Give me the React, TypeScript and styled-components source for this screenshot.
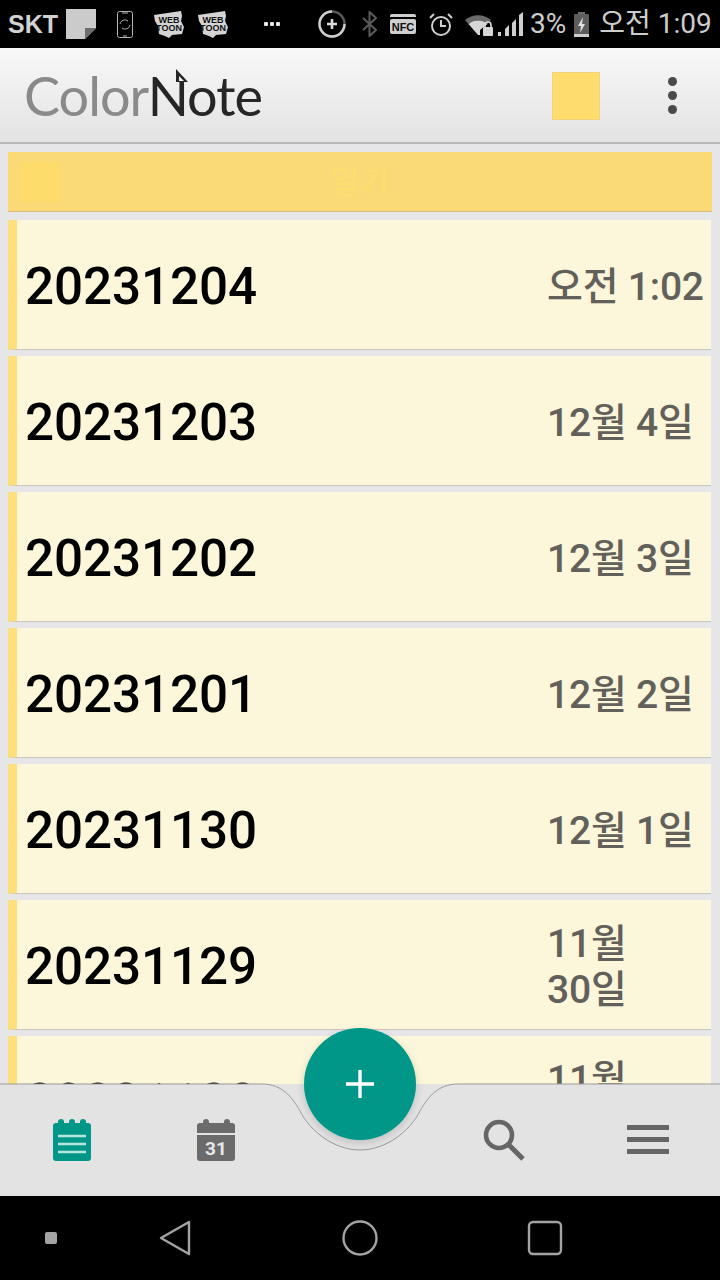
import React from "react";
import styled, { createGlobalStyle } from "styled-components";

const Global = createGlobalStyle`
  html, body { margin: 0; padding: 0; background: #000; }
  body { font-family: Roboto, "Noto Sans CJK KR", sans-serif; }
  * { box-sizing: border-box; }
`;

const Screen = styled.div`
  position: relative;
  width: 720px;
  height: 1280px;
  overflow: hidden;
  display: flex;
  flex-direction: column;
  background: #e6e6e8;
`;

const StatusBar = styled.div`
  flex: 0 0 48px;
  height: 48px;
  background: #000;
  display: flex;
  align-items: center;
  padding-left: 8px;
  color: #cfcfcf;
`;
const StatusSlot = styled.span<{ $ml: number }>`
  margin-left: ${(p) => p.$ml}px;
  display: flex;
  align-items: center;
  justify-content: center;
  flex: none;
`;
const Carrier = styled.span`
  font: 700 25px/48px "Liberation Sans", Arial, sans-serif;
  width: 48px;
  color: #d2d2d2;
  white-space: nowrap;
`;
const StatusText = styled.span<{ $ml: number }>`
  margin-left: ${(p) => p.$ml}px;
  font: 400 28px/48px Roboto, "Noto Sans CJK KR", sans-serif;
  white-space: nowrap;
  color: #cdcdcd;
`;

const Header = styled.header`
  flex: 0 0 96px;
  height: 96px;
  background: linear-gradient(#f8f8f8, #e3e3e3);
  border-bottom: 2px solid #b9b9b9;
  display: flex;
  align-items: center;
  padding: 0 43px 0 24px;
`;
const Logo = styled.div`
  font: 400 54px/1 Lato, sans-serif;
  letter-spacing: -1px;
  color: #8a8a8a;
  flex: 1;
  margin-top: 2px;
`;
const LogoDark = styled.span`
  color: #262626;
  position: relative;
`;
const LogoFold = styled.svg`
  position: absolute;
  left: 28px;
  top: 6px;
`;
const ColorSwatch = styled.div`
  width: 48px;
  height: 48px;
  margin-top: 1px;
  background: #fedd6e;
  border: 1px solid #eed27e;
  margin-right: 68px;
`;
const Dots = styled.div`
  width: 9px;
  display: flex;
  flex-direction: column;
  gap: 5px;
`;
const Dot = styled.span`
  width: 9px;
  height: 9px;
  border-radius: 50%;
  background: #4a4a4a;
`;

const Main = styled.main`
  flex: 1;
  overflow: hidden;
  padding: 8px 8px 0;
  display: flex;
  flex-direction: column;
  gap: 6px;
`;
const CategoryBar = styled.div`
  flex: none;
  height: 60px;
  margin-bottom: 2px;
  background: #f9da76;
  border-bottom: 1px solid #d8bd78;
  display: grid;
  grid-template-columns: 40px 1fr 40px;
  align-items: center;
  padding: 0 12px;
`;
const CategorySwatch = styled.span`
  width: 40px;
  height: 40px;
  background: #fddc6c;
`;
const CategoryTitle = styled.span`
  text-align: center;
  font: 500 32px/1 Roboto, "Noto Sans CJK KR", sans-serif;
  color: #fcdd70;
`;

const Row = styled.article`
  flex: none;
  height: 130px;
  margin-right: 1px;
  background: #fcf6da;
  border-left: 9px solid #fedf7c;
  border-bottom: 1px solid #c9c7bd;
  display: flex;
  align-items: center;
  padding: 4px 0 0 8px;
`;
const RowTitle = styled.div`
  flex: 1;
  padding-top: 1px;
  font: 500 51.2px/60px Roboto, sans-serif;
  color: #000;
  letter-spacing: -0.1px;
`;
const RowDate = styled.div`
  width: 164px;
  flex: none;
  font: 500 39px/46px Roboto, "Noto Sans CJK KR", sans-serif;
  letter-spacing: -0.2px;
  word-break: keep-all;
  color: #62605a;
`;

const BottomNav = styled.nav`
  position: absolute;
  left: 0;
  right: 0;
  bottom: 84px;
  height: 112px;
  background: #e3e3e3;
  display: grid;
  grid-template-columns: repeat(5, 144px);
  align-items: center;
  justify-items: center;
`;
const NavButton = styled.button`
  all: unset;
  display: flex;
  align-items: center;
  justify-content: center;
  width: 60px;
  height: 60px;
`;
const NavCurve = styled.svg`
  position: absolute;
  left: 0;
  top: -1px;
  pointer-events: none;
`;
const Fab = styled.button`
  all: unset;
  position: absolute;
  left: 304px;
  top: -56px;
  width: 112px;
  height: 112px;
  border-radius: 50%;
  background: #009688;
  box-shadow: 0 3px 8px rgba(0, 0, 0, 0.16);
  display: flex;
  align-items: center;
  justify-content: center;
`;
const SoftKeys = styled.div`
  position: absolute;
  left: 0;
  right: 0;
  bottom: 0;
  height: 84px;
  background: #000;
  display: grid;
  grid-template-columns: 102px 146px 224px 146px;
  align-items: center;
  justify-items: center;
`;

const NoteIcon = () => (
  <svg width="30" height="30" viewBox="0 0 30 30">
    <path d="M0 0h30v19L19 30H0z" fill="#cbcbcb" />
    <path d="M19 30V19h11z" fill="#6d6d6d" />
  </svg>
);
const PhoneIcon = () => (
  <svg width="16" height="27" viewBox="0 0 16 27" fill="none" stroke="#b5b5b5" strokeWidth="1">
    <rect x="0.5" y="0.5" width="15" height="26" rx="2" />
    <path d="M3 13a5 5 0 0 1 8-3M13 14a5 5 0 0 1-8 3" />
    <path d="M5 2h6M6 25h4" />
  </svg>
);
const WebtoonIcon = () => (
  <svg width="32" height="30" viewBox="0 0 32 30">
    <path d="M1 6l27-4 1 5-1 5 3 6-2 7-10 1-3 3-4-2-6-2-1-8-3-5z" fill="#d4d4d4" />
    <text x="16" y="14" textAnchor="middle" fontFamily="Liberation Sans" fontWeight="700" fontSize="9" fill="#111">WEB</text>
    <text x="16" y="22" textAnchor="middle" fontFamily="Liberation Sans" fontWeight="700" fontSize="9" fill="#111">TOON</text>
  </svg>
);
const MoreDots = () => (
  <svg width="16" height="6" viewBox="0 0 16 6" fill="#e8e8e8">
    <rect x="0" y="1" width="4" height="4" rx="1" />
    <rect x="6" y="1" width="4" height="4" rx="1" />
    <rect x="12" y="1" width="4" height="4" rx="1" />
  </svg>
);
const PlusRing = () => (
  <svg width="28" height="28" viewBox="0 0 28 28" fill="none">
    <circle cx="14" cy="14" r="12.5" stroke="#5a5a5a" strokeWidth="2.4" />
    <path d="M14 1.5A12.5 12.5 0 1 0 26.5 14" stroke="#d0d0d0" strokeWidth="2.4" />
    <path d="M14 9v10M9 14h10" stroke="#dcdcdc" strokeWidth="2.6" />
  </svg>
);
const BluetoothIcon = () => (
  <svg width="15" height="26" viewBox="0 0 15 26" fill="none" stroke="#5b5b5b" strokeWidth="2">
    <path d="M1 7l13 12-6.5 6V1L14 7 1 19" />
  </svg>
);
const NfcIcon = () => (
  <svg width="26" height="20" viewBox="0 0 26 20">
    <path d="M0 2a2 2 0 0 1 2-2h22a2 2 0 0 1 2 2v1H0z" fill="#cfcfcf" />
    <rect x="0" y="5" width="26" height="15" rx="2" fill="#cfcfcf" />
    <text x="13" y="16.5" textAnchor="middle" fontFamily="Liberation Sans" fontWeight="700" fontSize="11" fill="#111">NFC</text>
  </svg>
);
const AlarmIcon = () => (
  <svg width="24" height="24" viewBox="0 0 24 24" fill="none" stroke="#cfcfcf" strokeWidth="2">
    <circle cx="12" cy="14" r="9" />
    <path d="M12 8v6h5M1 6l4-4M23 6l-4-4" />
  </svg>
);
const WifiIcon = () => (
  <svg width="28" height="24" viewBox="0 0 28 24">
    <path d="M0 8a20 20 0 0 1 26 0l-3.5 4a15 15 0 0 0-19 0z" fill="#6a6a6a" />
    <path d="M3.5 12a15 15 0 0 1 19 0L15 18v5h-2z" fill="#d6d6d6" />
    <rect x="18" y="15" width="10" height="9" rx="1" fill="#d6d6d6" />
    <path d="M20 15v-2a3 3 0 0 1 6 0v2" fill="none" stroke="#d6d6d6" strokeWidth="1.6" />
  </svg>
);
const SignalIcon = () => (
  <svg width="25" height="24" viewBox="0 0 25 24" fill="#cfcfcf">
    <rect x="0" y="20" width="3" height="4" />
    <path d="M7 24v-7l4-4v11z" />
    <path d="M14 24V11l4-4v17z" />
    <path d="M21 24V3l4-3v24z" />
  </svg>
);
const BatteryIcon = () => (
  <svg width="15" height="25" viewBox="0 0 15 25">
    <rect x="4" y="0" width="7" height="3" fill="#6a6a6a" />
    <rect x="0" y="2" width="15" height="23" rx="1" fill="#5d5d5d" />
    <rect x="0" y="22" width="15" height="3" fill="#cfcfcf" />
    <path d="M9 5l-5 9h3l-1 7 5-9H8z" fill="#e0e0e0" />
  </svg>
);

const NotesIcon = () => (
  <svg width="38" height="42" viewBox="0 0 38 42" fill="#009688">
    <path d="M3 4h32a3 3 0 0 1 3 3v32a3 3 0 0 1-3 3H3a3 3 0 0 1-3-3V7a3 3 0 0 1 3-3z" />
    <rect x="5" y="0" width="6" height="10" rx="3" />
    <rect x="16" y="0" width="6" height="10" rx="3" />
    <rect x="27" y="0" width="6" height="10" rx="3" />
    <path d="M5 17h28M5 25h28M5 33h28" stroke="#b6e6de" strokeWidth="2.6" />
  </svg>
);
const CalendarIcon = () => (
  <svg width="38" height="42" viewBox="0 0 38 42">
    <path d="M3 4h32a3 3 0 0 1 3 3v7H0V7a3 3 0 0 1 3-3z" fill="#6b6b6b" />
    <rect x="6" y="0" width="6" height="9" rx="3" fill="#6b6b6b" />
    <rect x="27" y="0" width="6" height="9" rx="3" fill="#6b6b6b" />
    <path d="M0 16h38v23a3 3 0 0 1-3 3H3a3 3 0 0 1-3-3z" fill="#6b6b6b" />
    <text x="19" y="36" textAnchor="middle" fontFamily="Roboto" fontWeight="700" fontSize="19" fill="#e8e8e8">31</text>
  </svg>
);
const SearchIcon = () => (
  <svg width="42" height="42" viewBox="0 0 42 42" fill="none" stroke="#666">
    <circle cx="16" cy="16" r="13" strokeWidth="4.6" />
    <path d="M26 26l14 14" strokeWidth="5" />
  </svg>
);
const MenuIcon = () => (
  <svg width="42" height="30" viewBox="0 0 42 30" fill="#666">
    <rect x="0" y="0" width="42" height="5" />
    <rect x="0" y="12" width="42" height="5" />
    <rect x="0" y="24" width="42" height="5" />
  </svg>
);

const rows: [string, string][] = [
  ["20231204", "오전 1:02"],
  ["20231203", "12월 4일"],
  ["20231202", "12월 3일"],
  ["20231201", "12월 2일"],
  ["20231130", "12월 1일"],
  ["20231129", "11월 30일"],
  ["20231128", "11월 29일"],
];

export default function App() {
  return (
    <Screen>
      <Global />
      <StatusBar>
        <Carrier>SKT</Carrier>
        <StatusSlot $ml={10}><NoteIcon /></StatusSlot>
        <StatusSlot $ml={21}><PhoneIcon /></StatusSlot>
        <StatusSlot $ml={20}><WebtoonIcon /></StatusSlot>
        <StatusSlot $ml={12}><WebtoonIcon /></StatusSlot>
        <StatusSlot $ml={35}><MoreDots /></StatusSlot>
        <StatusSlot $ml={38}><PlusRing /></StatusSlot>
        <StatusSlot $ml={16}><BluetoothIcon /></StatusSlot>
        <StatusSlot $ml={13}><NfcIcon /></StatusSlot>
        <StatusSlot $ml={13}><AlarmIcon /></StatusSlot>
        <StatusSlot $ml={12}><WifiIcon /></StatusSlot>
        <StatusSlot $ml={5}><SignalIcon /></StatusSlot>
        <StatusText $ml={7}>3%</StatusText>
        <StatusSlot $ml={8}><BatteryIcon /></StatusSlot>
        <StatusText $ml={10}>오전 1:09</StatusText>
      </StatusBar>
      <Header>
        <Logo>
          Color
          <LogoDark>
            Note
            <LogoFold width="13" height="14" viewBox="0 0 13 14">
              <path d="M0 0l12 13H0z" fill="#262626" />
              <path d="M3 7l5 5H3z" fill="#eee" />
            </LogoFold>
          </LogoDark>
        </Logo>
        <ColorSwatch />
        <Dots><Dot /><Dot /><Dot /></Dots>
      </Header>
      <Main>
        <CategoryBar>
          <CategorySwatch />
          <CategoryTitle>일기</CategoryTitle>
        </CategoryBar>
        {rows.map(([title, date]) => (
          <Row key={title}>
            <RowTitle>{title}</RowTitle>
            <RowDate>{date}</RowDate>
          </Row>
        ))}
      </Main>
      <BottomNav>
        <NavCurve width="720" height="70" viewBox="0 0 720 70" fill="none">
          <path d="M0 1H262C282 1 292 14 300 28C310 48 334 67 360 67C386 67 410 48 420 28C428 14 438 1 458 1H720" stroke="#9a9a9a" strokeWidth="1" />
        </NavCurve>
        <NavButton><NotesIcon /></NavButton>
        <NavButton><CalendarIcon /></NavButton>
        <span />
        <NavButton><SearchIcon /></NavButton>
        <NavButton><MenuIcon /></NavButton>
        <Fab>
          <svg width="30" height="30" viewBox="0 0 30 30" stroke="#fff" strokeWidth="3.4">
            <path d="M15 1v28M1 15h28" />
          </svg>
        </Fab>
      </BottomNav>
      <SoftKeys>
        <svg width="12" height="12" viewBox="0 0 12 12"><rect width="12" height="12" rx="2" fill="#a3a3a3" /></svg>
        <svg width="32" height="36" viewBox="0 0 32 36" fill="none" stroke="#a3a3a3" strokeWidth="2.4" strokeLinejoin="round"><path d="M30 2v32L2 18z" /></svg>
        <svg width="36" height="36" viewBox="0 0 36 36" fill="none" stroke="#a3a3a3" strokeWidth="2.4"><circle cx="18" cy="18" r="16.5" /></svg>
        <svg width="36" height="36" viewBox="0 0 36 36" fill="none" stroke="#a3a3a3" strokeWidth="2.4"><rect x="2" y="2" width="32" height="32" rx="4" /></svg>
      </SoftKeys>
    </Screen>
  );
}
